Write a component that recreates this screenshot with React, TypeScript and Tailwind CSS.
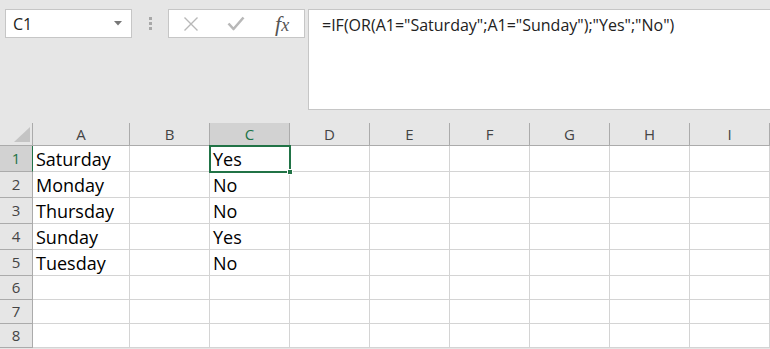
import React from "react";

const cols = ["A", "B", "C", "D", "E", "F", "G", "H", "I"];
const colWidths = ["w-[97px]", "w-[80px]", "w-[80px]", "w-[80px]", "w-[80px]", "w-[80px]", "w-[80px]", "w-[80px]", "w-[80px]"];

const rows: { h: string; a?: string; c?: string }[] = [
  { h: "h-[26px]", a: "Saturday", c: "Yes" },
  { h: "h-[26px]", a: "Monday", c: "No" },
  { h: "h-[26px]", a: "Thursday", c: "No" },
  { h: "h-[26px]", a: "Sunday", c: "Yes" },
  { h: "h-[26px]", a: "Tuesday", c: "No" },
  { h: "h-[24px]" },
  { h: "h-[24px]" },
  { h: "h-[24px]" },
];

const uiFont = "font-['Open_Sans','Noto_Sans',sans-serif]";

function FormulaBar() {
  return (
    <div className="flex items-start pt-[9px] h-[110px]">
      <div className="ml-[5px] flex h-[29px] w-[127px] items-center justify-between border border-[#c6c6c6] bg-white pl-[7px] pr-[9px]">
        <span className={`${uiFont} text-[16px] text-[#222]`}>C1</span>
        <svg width="8" height="5" viewBox="0 0 8 5">
          <path d="M0 0 L8 0 L4 4.5 Z" fill="#777" />
        </svg>
      </div>
      <div className="ml-[17px] flex h-[29px] w-[3px] flex-col items-center justify-center gap-[2px]">
        <div className="h-[3px] w-[3px] bg-[#a8a8a8]" />
        <div className="h-[3px] w-[3px] bg-[#a8a8a8]" />
        <div className="h-[3px] w-[3px] bg-[#a8a8a8]" />
      </div>
      <div className="ml-[16px] flex h-[29px] w-[137px] items-center border border-[#c6c6c6] bg-white">
        <div className="ml-[13px] flex w-[18px] justify-center">
          <svg width="16" height="16" viewBox="0 0 16 16">
            <path d="M1.5 1.5 L14.5 14.5 M14.5 1.5 L1.5 14.5" stroke="#b8b8b8" strokeWidth="1.4" fill="none" />
          </svg>
        </div>
        <div className="ml-[26px] flex w-[20px] justify-center">
          <svg width="18" height="15" viewBox="0 0 18 15">
            <path d="M1.5 7.5 L6.5 13 L16.5 1.5" stroke="#b8b8b8" strokeWidth="2.6" fill="none" strokeLinejoin="round" />
          </svg>
        </div>
        <span className="ml-[29px] font-['Liberation_Serif',serif] text-[22px] italic leading-none text-[#555]">
          f<span className="text-[18px]">x</span>
        </span>
      </div>
      <div className="ml-[3px] flex h-[101px] flex-1 items-start border border-r-0 border-[#c6c6c6] bg-white pl-[13px] pt-[3px]">
        <span className={`${uiFont} text-[16px] text-[#222]`}>
          =IF(OR(A1="Saturday";A1="Sunday");"Yes";"No")
        </span>
      </div>
    </div>
  );
}

function HeaderRow() {
  return (
    <div className="mt-[13px] flex h-[23px] border-b border-[#ababab]">
      <div className="relative w-[33px] border-r border-[#ababab]">
        <svg className="absolute left-[14px] top-[4px]" width="16" height="15" viewBox="0 0 16 15">
          <path d="M16 0 L16 15 L0 15 Z" fill="#c4c4c4" />
        </svg>
      </div>
      {cols.map((c, i) => (
        <div
          key={c}
          className={`${colWidths[i]} flex shrink-0 items-center justify-center border-r border-[#ababab] ${uiFont} text-[15px] ${
            c === "C" ? "bg-[#d2d2d2] text-[#217346]" : "text-[#444]"
          }`}
        >
          {c}
        </div>
      ))}
    </div>
  );
}

export default function App() {
  return (
    <div className="relative h-[349px] w-[770px] overflow-hidden bg-[#e6e6e6]">
      <FormulaBar />
      <HeaderRow />
      <div className="bg-white">
        {rows.map((r, ri) => (
          <div key={ri} className={`flex ${r.h} border-b border-[#d4d4d4]`}>
            <div
              className={`flex w-[33px] shrink-0 items-center justify-center border-r ${uiFont} text-[15px] ${
                ri === 0
                  ? "border-r-[#217346] bg-[#d2d2d2] text-[#217346]"
                  : "border-r-[#ababab] bg-[#e6e6e6] text-[#444]"
              } border-b border-b-[#ababab] -mb-px`}
            >
              {ri + 1}
            </div>
            {cols.map((c, i) => (
              <div
                key={c}
                className={`${colWidths[i]} flex shrink-0 items-center border-r border-[#d4d4d4] pl-[3px] pt-px ${uiFont} text-[18px] text-black`}
              >
                {c === "A" ? r.a : c === "C" ? r.c : null}
              </div>
            ))}
          </div>
        ))}
      </div>
      {/* active cell C1 */}
      <div className="pointer-events-none absolute left-[209px] top-[145px] h-[28px] w-[82px] border-2 border-[#217346]" />
      <div className="pointer-events-none absolute left-[287px] top-[169px] h-[6px] w-[6px] border border-white bg-[#217346]" />
    </div>
  );
}
